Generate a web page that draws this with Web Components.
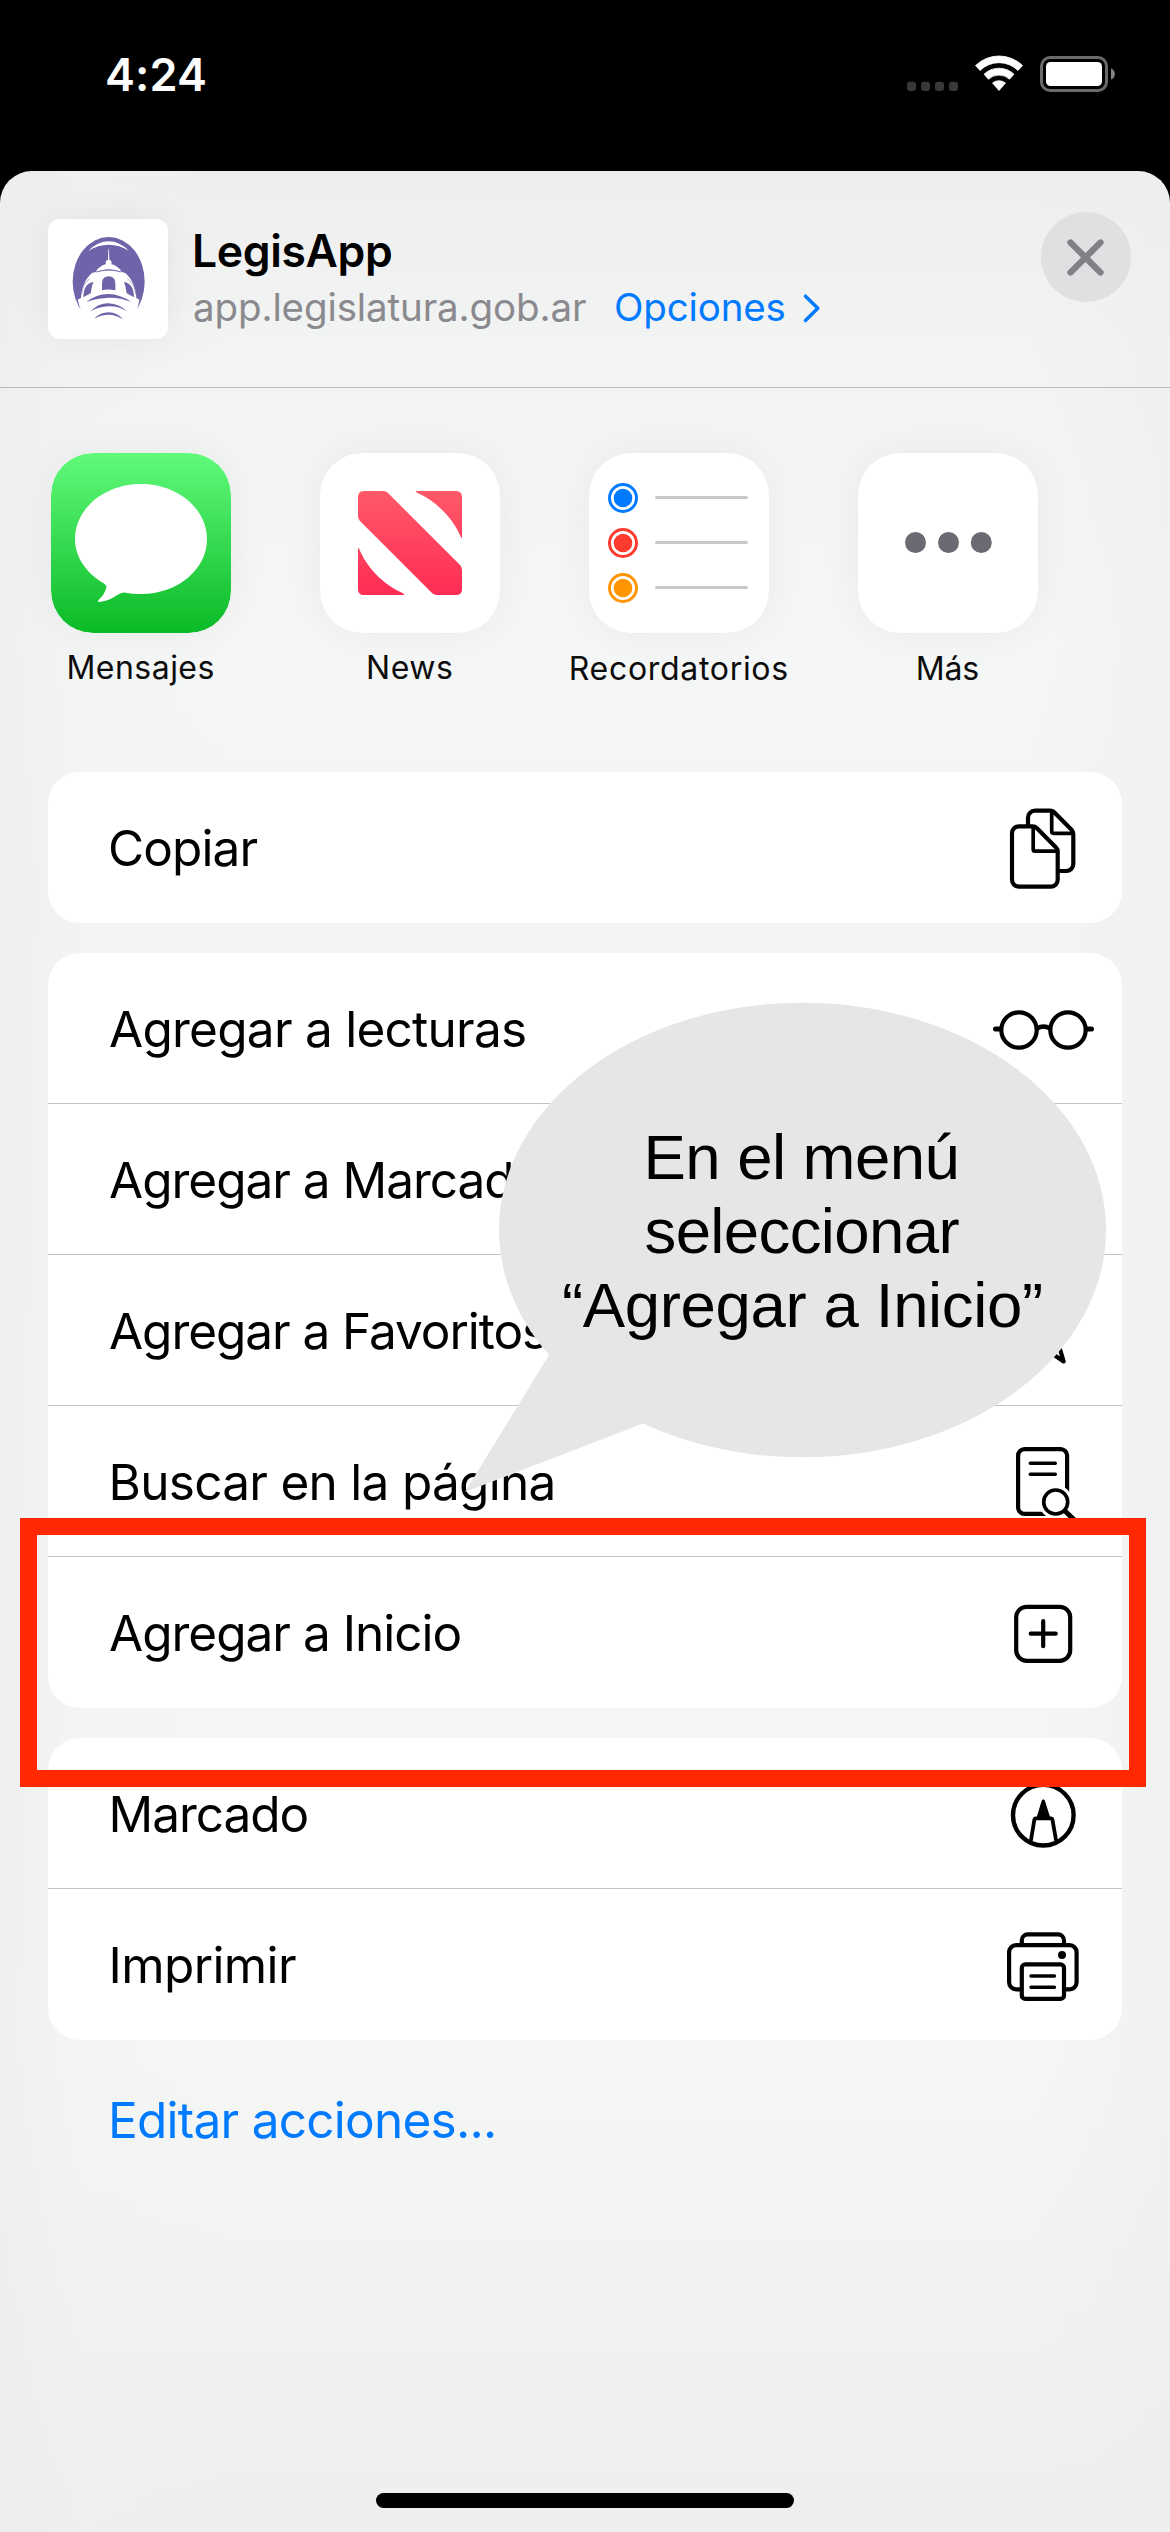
<!DOCTYPE html>
<html lang="es">
<head>
<meta charset="utf-8">
<meta name="viewport" content="width=device-width">
<title>LegisApp</title>
<style>
html,body{margin:0;padding:0;background:#000}
body{width:1170px;height:2532px;overflow:hidden}
</style>
</head>
<body>
<phone-screen>
  <status-bar slot="status" time="4:24"></status-bar>
  <share-sheet>
    <share-header slot="header" name="LegisApp" site="app.legislatura.gob.ar" options="Opciones"></share-header>
    <app-row slot="apps">
      <app-tile icon="messages" ink="145">Mensajes</app-tile>
      <app-tile icon="news" ink="84">News</app-tile>
      <app-tile icon="reminders" ink="216.5" shift="1">Recordatorios</app-tile>
      <app-tile icon="more" ink="60.5" shift="1">Más</app-tile>
    </app-row>
    <action-group>
      <action-row icon="copy" ink="147.5" last>Copiar</action-row>
    </action-group>
    <action-group>
      <action-row icon="glasses" ink="415">Agregar a lecturas</action-row>
      <action-row icon="book" ink="501">Agregar a Marcadores</action-row>
      <action-row icon="star" ink="436">Agregar a Favoritos</action-row>
      <action-row icon="find" ink="440">Buscar en la página</action-row>
      <action-row icon="add" ink="350.5" last>Agregar a Inicio</action-row>
    </action-group>
    <action-group>
      <action-row icon="markup" ink="195">Marcado</action-row>
      <action-row icon="print" ink="183.5" last>Imprimir</action-row>
    </action-group>
    <edit-link slot="footer">Editar acciones...</edit-link>
  </share-sheet>
  <highlight-frame slot="overlay"></highlight-frame>
  <speech-callout slot="overlay"></speech-callout>
</phone-screen>

<script>
const define = (name, html, setup) => {
  const tpl = document.createElement('template');
  tpl.innerHTML = html;
  customElements.define(name, class extends HTMLElement {
    connectedCallback() {
      if (this.shadowRoot) return;
      const root = this.attachShadow({ mode: 'open' });
      const copy = tpl.content.cloneNode(true);
      if (setup) setup(this, copy);
      root.append(copy);
    }
  });
};

const pen = document.createElement('canvas').getContext('2d');

/* A line of text whose tracking is set so that its ink spans a given width. */
define('ink-text', `<style>:host{display:block;white-space:pre}</style><slot></slot>`, (el) => {
  const size = +el.getAttribute('size');
  const weight = el.getAttribute('weight') || '400';
  const family = el.getAttribute('family') || 'Inter';
  const text = el.textContent;
  pen.font = `${weight} ${size}px "${family}"`;
  const m = pen.measureText(text);
  const ink = m.actualBoundingBoxRight + m.actualBoundingBoxLeft;
  const track = (+el.getAttribute('ink') - ink) / (text.length - 1);
  const after = m.width - m.actualBoundingBoxRight + track;
  el.style.font = `${weight} ${size}px/${el.getAttribute('line') || 60}px "${family}", sans-serif`;
  el.style.letterSpacing = track.toFixed(3) + 'px';
  el.style.marginLeft = m.actualBoundingBoxLeft.toFixed(2) + 'px';
  el.style.marginRight = (-after).toFixed(2) + 'px';
});

define('phone-screen', `<style>
:host{display:flex;flex-direction:column;position:relative;width:1170px;height:2532px;background:#000;overflow:hidden}
</style><slot name="status"></slot><slot></slot><slot name="overlay"></slot>`);

define('status-bar', `<style>
:host{display:flex;justify-content:space-between;height:171px;box-sizing:border-box;padding:45px 55px 0 107px;color:#fff}
svg{display:block;width:208px;height:60px}
</style>
<ink-text size="45" weight="600" ink="98"></ink-text>
<svg viewBox="907 45 208 60">
  <g fill="#383838"><rect x="907" y="81.700" width="9" height="9.300" rx="3"/><rect x="921" y="81.700" width="9" height="9.300" rx="3"/><rect x="935" y="81.700" width="9" height="9.300" rx="3"/><rect x="949" y="81.700" width="9" height="9.300" rx="3"/></g>
  <g fill="#fff" stroke="#fff" stroke-width=".8" stroke-linejoin="round">
    <path d="M975.500 65.500A33.800 33.800 0 0 1 1022.500 65.500L1018 70.500A27 27 0 0 0 980 70.500Z"/>
    <path d="M984 74.200A21.700 21.700 0 0 1 1014 74.200L1009.500 79.200A15.500 15.500 0 0 0 988.500 79.200Z"/>
    <path d="M992.500 83A10.400 10.400 0 0 1 1005.500 83L999 90.500Z"/>
  </g>
  <rect x="1041.500" y="57.500" width="65" height="33" rx="8.500" fill="none" stroke="#6a6a6a" stroke-width="3"/>
  <rect x="1046" y="62" width="56" height="24" rx="4.500" fill="#fff"/>
  <path d="M1111 68.500C1116.200 70 1116.200 78 1111 79.500Z" fill="#858585"/>
</svg>`, (el, root) => { root.querySelector('ink-text').textContent = el.getAttribute('time'); });

define('share-sheet', `<style>
:host{display:flex;flex-direction:column;flex:1;border-radius:32px 32px 0 0;overflow:hidden;
background:linear-gradient(90deg,rgba(236,236,237,.6) 0,rgba(240,241,241,.3) 7%,transparent 20%,transparent 88%,rgba(236,238,238,.5) 100%),linear-gradient(#eeeeee 0,#f2f3f3 7%,#f5f6f6 20%,#f3f4f6 30%,#f4f5f6 50%,#f5f6f6 80%,#eeeeef 100%)}
.groups{display:flex;flex-direction:column;gap:30px;padding:0 48px}
.bar{width:418px;height:15px;border-radius:8px;background:#000;margin:auto auto 24px}
</style>
<slot name="header"></slot><slot name="apps"></slot>
<div class="groups"><slot></slot></div>
<slot name="footer"></slot><div class="bar"></div>`);

define('share-header', `<style>
:host{display:flex;height:217px;box-sizing:border-box;padding:0 39px 0 48px;border-bottom:1px solid #bcbcbe}
.logo{width:120px;height:120px;margin-top:48px;border-radius:12px;background:#fff;box-shadow:0 0 36px rgba(0,0,0,.06)}
.names{display:flex;flex-direction:column;gap:1px;padding:52px 0 0 26px;flex:1}
.name{color:#000;padding-left:1px}
.line{display:flex;color:#8a8a8e}
.options{display:flex;color:#007aff;margin-left:30px;gap:18px}
.options svg{width:19px;height:32px;margin-top:12px}
.close{display:flex;width:90px;height:90px;margin-top:41px;border-radius:50%;background:#dfe0e2}
</style>
<svg class="logo" viewBox="54 57 360 360">
  <ellipse cx="236" cy="245" rx="108" ry="134" fill="#6f64aa"/>
  <g fill="#fff">
    <path d="M175 153Q203 124 236 124T297 153Q268 134 236 134T175 153Z"/>
    <path d="M235 148H237L238 179A10 10 0 0 1 244 192Q265 198 275 215Q236 200 197 215Q207 198 228 192A10 10 0 0 1 234 179Z"/>
    <path d="M186 219Q236 201 286 219C305 235 318 264 319 294L328 299Q325 318 319 336L330 400H142L154 336Q148 318 143 299L153 294C154 264 167 235 186 219Z"/>
  </g>
  <g fill="#6f64aa">
    <path d="M216 271V249Q217 229 236 229T256 249V271Q236 266 216 271Z"/>
    <path d="M160 292Q161 250 190 246Q184 262 182 280Z"/><path d="M312 292Q311 250 282 246Q288 262 290 280Z"/>
    <path d="M169 306Q201 281 236 282T304 306Q270 292 236 293T169 306Z"/>
    <path d="M181 335Q205 309 236 310T292 335Q266 318 236 319T181 335Z"/>
    <path d="M192 356Q212 337 236 337T280 358Q258 344 236 344T192 356Z"/>
  </g>
  <g fill="none" stroke="#6f64aa" stroke-width="2.500"><path d="M199 216Q236 205 273 216"/><path d="M155 283Q158 250 180 236M317 283Q314 250 292 236" stroke-width="1.500"/></g>
</svg>
<div class="names">
  <ink-text class="name" size="44.5" weight="600" ink="196" line="56"></ink-text>
  <div class="line"><ink-text class="site" size="38.5" ink="392" line="54"></ink-text>
    <div class="options"><ink-text class="opt" size="38.5" ink="168.5" line="54"></ink-text>
      <svg viewBox="0 0 19 32"><path d="M2.500 4.200L14.800 16.300L2.500 28.400" fill="none" stroke="#007aff" stroke-width="3.500" stroke-linecap="round" stroke-linejoin="round"/></svg></div></div>
</div>
<svg class="close" viewBox="0 0 90 90"><path d="M29.500 30.500L59.500 60.500M59.500 30.500L29.500 60.500" stroke="#818185" stroke-width="6.300" stroke-linecap="round"/></svg>`,
(el, root) => {
  root.querySelector('.name').textContent = el.getAttribute('name');
  root.querySelector('.site').textContent = el.getAttribute('site');
  root.querySelector('.opt').textContent = el.getAttribute('options');
});

define('app-row', `<style>
:host{display:flex;gap:29px;height:384px;box-sizing:border-box;padding:65px 0 0 21px}
</style><slot></slot>`);

const tiles = {
  messages: `<defs><linearGradient id="g" x1="0" y1="0" x2="0" y2="1"><stop offset="0" stop-color="#61fa7a"/><stop offset="1" stop-color="#0aba26"/></linearGradient></defs>
    <rect width="180" height="180" rx="42" fill="url(#g)"/>
    <path d="M90 31C126.500 31 156 55.500 156 86S126.500 141 90 141Q81 141 73.500 139.500Q70.500 139.500 67 141.500Q57 148.500 48 149Q46 148.500 48 146.500Q54 141 55.500 134Q55.500 132 53 130.500C35 120 24 104 24 86C24 55.500 53.500 31 90 31Z" fill="#fff"/>`,
  news: `<defs><linearGradient id="g" gradientUnits="userSpaceOnUse" x1="0" y1="38" x2="0" y2="142"><stop offset="0" stop-color="#ff5968"/><stop offset="1" stop-color="#ff2c55"/></linearGradient></defs>
    <rect width="180" height="180" rx="42" fill="#fff"/>
    <g fill="url(#g)"><path d="M44 38H63Q66 38 68 40L140 112Q142 114 142 117V136Q142 142 136 142H117Q114 142 112 140L40 68Q38 66 38 63V44Q38 38 44 38Z"/>
    <path d="M96 38H136Q142 38 142 44V84.500Q141.500 85.500 140.800 84C133 65 116 48 97 39.800Q95 38.500 96 38Z"/>
    <path d="M84 142H44Q38 142 38 136V95.500Q38.500 94.500 39.200 96C47 115 64 132 83 140.200Q85 141.500 84 142Z"/></g>`,
  reminders: `<rect width="180" height="180" rx="42" fill="#fff"/>
    <g fill="none" stroke-width="3"><circle cx="34" cy="45" r="13.500" stroke="#007aff"/><circle cx="34" cy="90" r="13.500" stroke="#ff3b30"/><circle cx="34" cy="135" r="13.500" stroke="#ff9500"/></g>
    <circle cx="34" cy="45" r="9.300" fill="#007aff"/><circle cx="34" cy="90" r="9.300" fill="#ff3b30"/><circle cx="34" cy="135" r="9.300" fill="#ff9500"/>
    <path d="M67.500 44.500H157.500M67.500 89.500H157.500M67.500 134.500H157.500" stroke="#c7c7cc" stroke-width="3" stroke-linecap="round"/>`,
  more: `<rect width="180" height="180" rx="42" fill="#fff"/><g fill="#6b6a72"><circle cx="57.500" cy="89.500" r="10.500"/><circle cx="90.500" cy="89.500" r="10.500"/><circle cx="123.300" cy="89.500" r="10.500"/></g>`
};

define('app-tile', `<style>
:host{display:flex;flex-direction:column;align-items:center;width:240px;color:#0c0c0c}
svg{display:block;width:180px;height:180px;border-radius:42px;box-shadow:0 0 42px rgba(0,0,0,.05);margin-bottom:15px}
</style><svg viewBox="0 0 180 180"></svg><ink-text size="32" line="40"></ink-text>`, (el, root) => {
  root.querySelector('svg').innerHTML = tiles[el.getAttribute('icon')];
  const label = root.querySelector('ink-text');
  label.textContent = el.textContent;
  label.setAttribute('ink', el.getAttribute('ink'));
  label.style.paddingTop = (el.getAttribute('shift') || 0) + 'px';
});

define('action-group', `<style>
:host{display:flex;flex-direction:column;background:#fff;border-radius:32px;overflow:hidden}
</style><slot></slot>`);

const star = (cx, cy, R, r) => Array.from({ length: 10 }, (_, i) => {
  const a = -Math.PI / 2 + i * Math.PI / 5, d = i % 2 ? r : R;
  return (cx + d * Math.cos(a)).toFixed(1) + ' ' + (cy + d * Math.sin(a)).toFixed(1);
}).join('L');

const glyphs = {
  copy: `<path d="M45 54V45.700a7 7 0 0 1 7-7H67Q69.500 38.700 71.200 40.300L89 58.300Q90.300 59.800 90.300 62V92a7 7 0 0 1-7 7H76"/><path d="M68.700 39.500V59.300q0 2 2 2H89.500" stroke-width="3.700"/>
    <path d="M36 54.300H49.500Q52 54.300 53.700 56L73 75.500Q74.700 77.200 74.700 79.500V107.700a7 7 0 0 1-7 7H36a7 7 0 0 1-7-7V61.300a7 7 0 0 1 7-7Z"/><path d="M50.200 55V77.200q0 2 2 2H74" stroke-width="3.700"/>`,
  glasses: `<circle cx="36" cy="77" r="17.700"/><circle cx="85" cy="77" r="17.700"/><path d="M54 75.500Q60.500 71.500 67 75.500" stroke-width="4.600"/><path d="M12.500 76H17M104 76H108.500" stroke-width="5"/>`,
  book: `<path d="M60 54Q45 46 30 52V100Q45 94 60 102Q75 94 90 100V52Q75 46 60 54ZM60 54V102"/>`,
  star: `<path d="M${star(60.300, 78.500, 34.500, 14)}Z"/>`,
  find: `<rect x="35.100" y="43.100" width="49" height="64.800" rx="6.500"/><path d="M47.300 57.300H72.300M47.300 68.300H72.300" stroke-width="3.500"/>
    <circle cx="72.700" cy="96" r="17" fill="#fff" stroke="none"/><circle cx="72.700" cy="96" r="12" stroke-width="3.600"/><path d="M82 105L94 116.500" stroke-width="5"/>`,
  add: `<rect x="33.200" y="49.800" width="54" height="54" rx="10.500"/><path d="M47.700 76.700H72.700M60.200 64.200V89.200"/>`,
  markup: `<circle cx="60.300" cy="77.200" r="30.300" stroke-width="4.400"/><path d="M48 102L51.300 82Q51.600 80.300 53 80.300H67.800Q69.200 80.300 69.500 82L73 102" stroke-width="3.800"/>
    <path d="M58.700 62.800Q60.300 59.800 61.900 62.800L68 82H52.800Z" fill="#000" stroke="none"/>`,
  print: `<path d="M38.800 56V51.400a6 6 0 0 1 6-6H75a6 6 0 0 1 6 6V56"/><rect x="26.100" y="56.100" width="67.500" height="44.200" rx="7"/>
    <rect x="38.800" y="75.400" width="42.200" height="34.500" rx="3.500" fill="#fff"/><path d="M48 87H71.500M48 98.300H71.500" stroke-width="3.400"/><circle cx="79" cy="66" r="4" fill="#000" stroke="none"/>`
};

define('action-row', `<style>
:host{display:flex;justify-content:space-between;height:151px;box-sizing:border-box;padding:0 19px 0 62px;border-bottom:1px solid #c2c2c4;color:#000}
:host([last]){border-bottom-color:transparent}
ink-text{padding-top:46px}
svg{display:block;width:120px;height:150px;fill:none;stroke:#000;stroke-width:4.200;stroke-linecap:round;stroke-linejoin:round}
</style><ink-text size="49.5"></ink-text><svg viewBox="0 0 120 150"></svg>`, (el, root) => {
  const label = root.querySelector('ink-text');
  label.textContent = el.textContent;
  label.setAttribute('ink', el.getAttribute('ink'));
  if (/^[BIM]/.test(el.textContent)) label.style.paddingLeft = '2.5px';
  root.querySelector('svg').innerHTML = glyphs[el.getAttribute('icon')];
});

define('edit-link', `<style>:host{display:flex;padding:50px 0 0 112px;color:#007aff}</style>
<ink-text size="49.5" ink="382"></ink-text>`, (el, root) => { root.querySelector('ink-text').textContent = el.textContent; });

define('highlight-frame', `<style>
:host{display:block;position:absolute;left:20px;top:1518px;width:1125.500px;height:269px;box-sizing:border-box;border:17px solid #ff2800}
</style>`);

define('speech-callout', `<style>
:host{display:flex;flex-direction:column;align-items:center;position:absolute;left:464px;top:1002px;width:642px;height:491px;box-sizing:border-box;padding:118px 0 0 35px;color:#000;isolation:isolate}
svg{position:absolute;left:0;top:0;width:642px;height:491px;z-index:-1}
</style>
<svg viewBox="464 1002 642 491"><ellipse cx="802.500" cy="1230" rx="303.500" ry="227.300" fill="#e6e6e6"/><path d="M549 1355L465 1492L643 1423.500L700 1300Z" fill="#e6e6e6"/></svg>
<ink-text family="Liberation Sans" size="63.5" line="74" ink="308">En el menú</ink-text>
<ink-text family="Liberation Sans" size="63.5" line="74" ink="314">seleccionar</ink-text>
<ink-text family="Liberation Sans" size="63.5" line="74" ink="477">“Agregar a Inicio”</ink-text>`);
</script>
</body>
</html>
